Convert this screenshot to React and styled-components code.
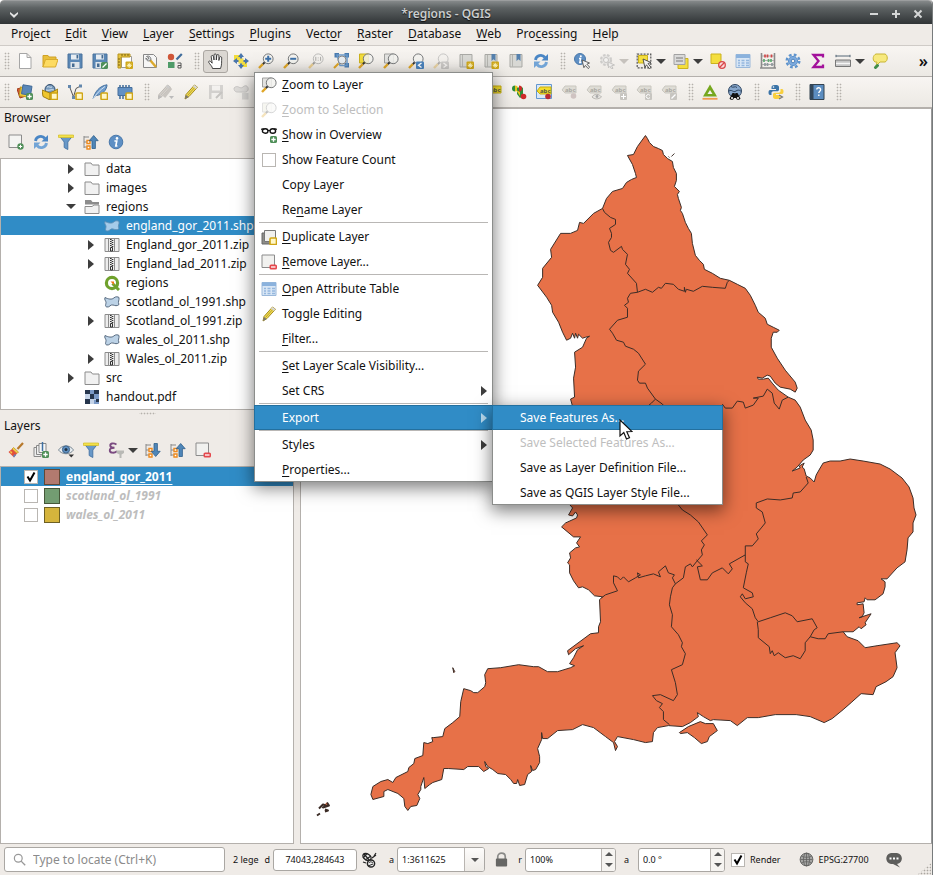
import React from 'react';
import styled, { createGlobalStyle, css } from 'styled-components';

const GlobalStyle = createGlobalStyle`
  *, *::before, *::after { box-sizing: border-box; }
  html, body, #root { margin: 0; height: 100%; }
  body { background: #fff; overflow: hidden; }
  button, input, select { font: inherit; color: inherit; }
`;

const blue = '#308cc6';
const panel = '#efebe7';
const line = '#b4b0ac';

/* ---------- icon artwork, on a 16 x 16 grid ---------- */

const Lens = ({ back, sign, mark }) => (
  <>
    {back}
    <circle cx="10.2" cy="5.8" r="4.9" fill="#f2f2ee" fillOpacity=".85" stroke="#77797a" />
    <path d="M6.6 9.4 4.8 11.2" stroke="#333" strokeWidth="2" />
    <path d="M4.8 11.2 1 15" stroke="#e0a728" strokeWidth="2.4" />
    {sign}
    {mark}
  </>
);
const YellowBadge = () => (
  <rect x="9" y="9" width="6.5" height="6.5" rx="1" fill="#fff7c8" stroke="#cfa515" strokeWidth="1.6" />
);
const StarBadge = () => (
  <>
    <rect x="8.5" y="8.5" width="7.5" height="7.5" rx="1" fill="#d0a81a" />
    <path d="M12.2 9.8v5M9.8 12.3h5M10.6 10.7l3.3 3.3M13.9 10.7l-3.3 3.3" stroke="#fff6c0" />
  </>
);
const GreenBadge = () => (
  <g transform="translate(9 9)">
    <rect width="7" height="7" rx="1.6" fill="#4f8f58" />
    <path d="M3.5 1.3v4.4M1.3 3.5h4.4" stroke="#fff" strokeWidth="1.3" />
  </g>
);
const RedBadge = () => (
  <>
    <rect x="8.5" y="10.5" width="7.5" height="5" rx="1.6" fill="#e5484d" />
    <path d="M10 13h4.5" stroke="#fff" strokeWidth="1.3" />
  </>
);
const Disk = () => (
  <>
    <path d="M1 1h14v14H1z" fill="#5a87b5" stroke="#4a739c" />
    <path d="M4 1.5h8v5H4z" fill="#e8edf2" />
    <path d="M3.5 9h9v6h-9z" fill="#dfe5ea" />
    <path d="M9.5 2h1.8v3.4H9.5zM5 10.5h2.5V14H5z" fill="#456b91" />
  </>
);
const Tag = ({ yellow }) => (
  <>
    <path d="M1 6 4 2h11v7H4z" fill={yellow ? '#f4dd2a' : '#dedcd5'} stroke={yellow ? '#c9ae10' : '#c9c7c0'} />
    <text x="4" y="8" fontFamily="Noto Sans, sans-serif" fontSize="6" fontWeight="700" fill={yellow ? '#554' : '#aaa8a2'}>abc</text>
  </>
);
const Pencil = ({ grey }) => (
  <>
    <path d="M2 15l1-4.5L11.5 1 14.5 3.2 6 12.5z" fill={grey ? '#d5d1cc' : '#f1dc52'} stroke={grey ? '#bdb9b4' : '#a48b22'} />
    <path d="M10 2.8l2.8 2.2 1.7-1.8L11.5 1z" fill={grey ? '#ccc' : '#d9d9d9'} />
    <path d="M2 15l1-4 2.6 2z" fill={grey ? '#bbb' : '#777'} />
    <path d="M4.5 11.5l7-7.8" stroke={grey ? '#c2beb9' : '#b9a12d'} />
  </>
);
const Refresh = () => (
  <>
    <path d="M2.5 7C3 2.5 9 .8 12 4.5" fill="none" stroke="#4a86c5" strokeWidth="2.8" />
    <path d="M15 1v6.5H8.5z" fill="#4a86c5" />
    <path d="M13.5 9C13 13.5 7 15.2 4 11.5" fill="none" stroke="#72a4d6" strokeWidth="2.8" />
    <path d="M1 15V8.5h6.5z" fill="#72a4d6" />
  </>
);
const Funnel = () => (
  <>
    <path d="M1 1.5h14L9.8 8v7.5l-3.6-2V8z" fill="#6898c8" stroke="#4a78a8" />
    <path d="M.5 1h15v2.5H.5z" fill="#f3e14c" stroke="#d4bd25" strokeWidth=".7" />
  </>
);
const Info = () => (
  <>
    <circle cx="8" cy="8" r="6.8" fill="#5e8fc4" stroke="#4a78aa" />
    <circle cx="9" cy="4.4" r="1.3" fill="#fff" />
    <path d="M6.4 7h2.4l-1 5h1.6" fill="none" stroke="#fff" strokeWidth="1.6" />
  </>
);
const TreeArrow = ({ down }) => (
  <>
    <path d="M1 2v12M1 3h5M1 8h4M1 13h4" stroke="#888" fill="none" />
    <path d="M4 6.5h3v3H4zM4 12h3v3H4z" fill="#fff" stroke="#ef8a1d" strokeWidth="1.4" />
    <path
      d={down ? 'M9 1.5h3.4v7.8h2.8L10.7 14.5 6.2 9.3h2.8z' : 'M9 14.5h3.4V6.7h2.8L10.7 1.5 6.2 6.7H9z'}
      fill="#4f86b8" stroke="#2f5f8c" strokeWidth=".8"
    />
  </>
);
const Notebook = ({ blueMark }) => (
  <>
    <path d="M2 1.5h12V14H2z" fill="#d8d8d4" stroke="#a9a9a5" />
    <path d="M4.5 2v12" stroke="#b5b5b0" />
    {blueMark && <path d="M8.500 1h4v7l-2-1.800-2 1.800z" fill="#5580ad" />}
  </>
);
const Table = () => (
  <>
    <path d="M1 1.5h14v13H1z" fill="#d8e6f5" stroke="#9ab8da" />
    <path d="M1 1.5h14V5H1z" fill="#8bb2dd" />
    <path d="M3 7.5h2M6.5 7.5h3M11 7.5h3M3 10h2M6.5 10h3M11 10h3M3 12.5h2M6.5 12.5h3M11 12.5h3" stroke="#94b7de" strokeWidth="1.3" />
  </>
);
const Blob = ({ light }) => (
  <path
    d="M1 3.5C4 5 8 6 10 3.800 12 2.200 14 2.800 15 3.500c.5 3-1.500 4 0 7-2 2-4 1-6 .500-3-.8-3 2.500-6 2-2.500-.5-1-2.500-1-4.500S0 6 1 3.500z"
    fill={light ? '#a5cbe9' : '#bcd2e6'} stroke={light ? '#5f8fb5' : '#4a5e74'} strokeWidth=".9"
  />
);
const Folder = () => <path d="M1 2h6l1.5 2H15v10.5H1z" fill="#f1f1f1" stroke="#8c8c8c" />;
const Gear = () => (
  <>
    <circle cx="8" cy="8" r="6.300" fill="none" stroke="#5f94cd" strokeWidth="2.400" strokeDasharray="2.700 2.250" />
    <circle cx="8" cy="8" r="4.600" fill="#7caade" stroke="#5f94cd" />
    <circle cx="8" cy="8" r="1.800" fill="#f5f2ee" stroke="#5284ba" />
  </>
);
const Globe = ({ fill, stroke }) => (
  <>
    <circle cx="8" cy="8" r="6.8" fill={fill} stroke={stroke} />
    <path d="M1.5 8h13M8 1v14M2.500 4.500c3 1.500 8 1.500 11 0M2.500 11.500c3-1.500 8-1.500 11 0" fill="none" stroke={stroke} strokeWidth=".8" />
    <ellipse cx="8" cy="8" rx="3.3" ry="6.8" fill="none" stroke={stroke} strokeWidth=".8" />
  </>
);

const icons = {
  page: <path d="M2.5.5h7.5l4 4v11H2.5zM10 .5v4h4" fill="#fff" stroke="#a6a6a6" />,
  open: (
    <>
      <path d="M1 2.5h5l1 1.5h7v3H4l-3 7z" fill="#e9bf3a" stroke="#cfa126" />
      <path d="M3.5 6.5H16l-2.5 7.5H1z" fill="#fddb62" stroke="#d8ab2c" />
    </>
  ),
  save: <Disk />,
  saveAs: <><Disk /><rect x="9" y="9" width="7" height="7" rx="1.5" fill="#4f8f58" /><path d="M10.5 14.5l4-4" stroke="#fff" strokeWidth="1.3" /></>,
  layout: (
    <>
      <path d="M4.5 3.5h10v11h-10z" fill="#fff" stroke="#9b9b9b" />
      <path d="M1 1h12v3H4v11H1z" fill="#e7c440" stroke="#b8951e" />
      <path d="M5 1v2M8 1v2M11 1v2M1 6h2M1 9h2M1 12h2" stroke="#7b6210" />
      <StarBadge />
    </>
  ),
  layoutManager: (
    <>
      <path d="M1.5 1.500h10l3 3v10h-13z" fill="#f6f6f6" stroke="#888" />
      <path d="M8 7l6 7" stroke="#dba92c" strokeWidth="2.4" />
      <path d="M4.500 3.500C7 2 9.500 4.500 8.800 7 6.500 9 4 7.500 3.800 5l2 1.500L7 5z" fill="#d9dde0" stroke="#666" strokeWidth=".8" />
    </>
  ),
  styleManager: (
    <>
      <circle cx="4" cy="4" r="3.2" fill="#cf5638" />
      <path d="M14.8 1 9.5 6.5" stroke="#3f6c9b" strokeWidth="2.2" />
      <path d="M1 9h6.5v6H1z" fill="#4f9b68" />
      <path d="M10.5 10h3.5v5h-3v-2.500h3" fill="none" stroke="#555" />
    </>
  ),
  hand: (
    <path d="M4.500 15.500c0-2-3-4.500-3.800-6.200C.2 8 2 7.500 3 9l1.200 1.200-1-6.500c0-1.600 2-1.700 2.300 0L6 7V2c0-1.500 2.200-1.500 2.300 0v5l.5-4.500c.2-1.500 2.200-1.200 2.100.2V7.500l.8-3.200c.5-1.300 2.200-.8 2 .6-.2 3.800.3 7-1.200 10.600z" fill="#fff" stroke="#333" strokeWidth=".9" />
  ),
  panSelection: (
    <>
      <path d="M1 2h7v7H1zM8 7h6v7H8z" fill="#f2dc3a" />
      <path d="M8 0l3 4H5zM8 16l3-4H5zM0 8l4-3v6zM16 8l-4-3v6z" fill="#4a76ad" />
      <path d="M8 3v10M3 8h10" stroke="#4a76ad" strokeWidth="2.200" />
      <path d="M5.500 5.500h5v5h-5z" fill="#f4e04a" />
    </>
  ),
  zoomIn: <Lens sign={<path d="M7.2 5.8h6M10.2 2.8v6" stroke="#3d70a8" strokeWidth="2" />} />,
  zoomOut: <Lens sign={<path d="M7.2 5.8h6" stroke="#3d70a8" strokeWidth="2" />} />,
  zoomNative: (
    <g opacity=".45">
      <Lens sign={<path d="M7.800 3.800v4M12.600 3.800v4M10.200 4.500v.8M10.200 6.800v.8" stroke="#555" />} />
    </g>
  ),
  zoomFull: (
    <>
      <path d="M1.5 0h4.5v4.5H1.5zM11.5 0H16v4.500h-4.500zM11.500 10H16v4.500h-4.500z" fill="#4a7cb0" />
      <path d="M4 2h10v10.5H7z" fill="none" stroke="#6c9aca" strokeWidth="1.5" />
      <circle cx="9" cy="7" r="4" fill="#e5ecf3" fillOpacity=".8" stroke="#888" />
      <path d="M5.5 10.5 1 15" stroke="#e0a728" strokeWidth="2.2" />
    </>
  ),
  zoomSelected: <Lens back={<path d="M1.5 1h9v9h-9z" fill="#f2dc3a" stroke="#cbb21d" />} />,
  zoomLayer: <Lens back={<path d="M1.5 1h9v9h-9z" fill="#e2e2e0" stroke="#a0a09e" />} />,
  zoomLayerOff: <g opacity=".3"><Lens back={<path d="M1.5 1h9v9h-9z" fill="#e2e2d0" stroke="#a0a09e" />} /></g>,
  zoomLast: <Lens mark={<><rect x="8" y="8.5" width="8" height="7.5" rx="1" fill="#4a83bd" /><path d="M13.500 10l-3 2.200 3 2.300" fill="none" stroke="#fff" strokeWidth="1.400" /></>} />,
  zoomNext: <g opacity=".35"><Lens mark={<><rect x="8" y="8.5" width="8" height="7.5" rx="1" fill="#888" /><path d="M10.500 10l3 2.200-3 2.300" fill="none" stroke="#fff" strokeWidth="1.400" /></>} /></g>,
  newMap: <><Notebook /><StarBadge /></>,
  newBookmark: <><Notebook blueMark /><StarBadge /></>,
  bookmarks: <Notebook blueMark />,
  refresh: <Refresh />,
  identify: (
    <>
      <circle cx="6" cy="6" r="5.5" fill="#5e8fc4" stroke="#4a78aa" />
      <path d="M5 5.500h1.600l-.8 4h1.500" fill="none" stroke="#fff" strokeWidth="1.400" />
      <circle cx="6.8" cy="3.3" r="1" fill="#fff" />
      <path d="M8 7l7.500 3-2.600 1.200 2.800 3-1.500 1.400-2.800-3.200-1.500 2.300z" fill="#f2f2f2" stroke="#555" strokeWidth=".9" />
    </>
  ),
  action: (
    <g opacity=".5">
      <circle cx="7" cy="7" r="5" fill="#ddd" stroke="#aaa" strokeWidth="2.2" strokeDasharray="2.5 1.5" />
      <circle cx="7" cy="7" r="2.5" fill="#f5f5f5" stroke="#999" />
      <path d="M9 9l6.500 3-3 .8 1.500 2.500-1.500.5-1.500-2.500-1.500 1.500z" fill="#eee" stroke="#999" />
    </g>
  ),
  select: (
    <>
      <path d="M1.200 1.200h13.600v13.600H1.200z" fill="none" stroke="#555" strokeWidth="1.200" strokeDasharray="2 1.200" />
      <path d="M2.500 2.500h9v7.500h-9z" fill="#f4de3e" stroke="#cbb21d" />
      <path d="M7 6l8 3.500-3 1 3 3.800-1.600 1.400-2.900-3.900-1.600 2.700z" fill="#f2f2f2" stroke="#444" strokeWidth=".9" />
    </>
  ),
  selectValue: (
    <>
      <path d="M5 5.500h10v10H5z" fill="#f4de3e" stroke="#cbb21d" />
      <path d="M1 1.500h11v10H1z" fill="#dadada" stroke="#a2a2a2" />
      <path d="M3 5h7M3 8h7" stroke="#999" strokeWidth="1.500" />
    </>
  ),
  deselect: (
    <>
      <path d="M1 1h10v9.500H1z" fill="#f4de3e" stroke="#cbb21d" />
      <circle cx="12" cy="12" r="3.300" fill="#fbdada" stroke="#d8484a" strokeWidth="1.300" />
      <path d="M9.800 14.200l4.400-4.400" stroke="#d8484a" strokeWidth="1.300" />
    </>
  ),
  table: <Table />,
  abacus: (
    <>
      <path d="M1.5 0v15.500M14.500 0v15.500M0 15h16" stroke="#8b8b8b" strokeWidth="1.6" />
      <path d="M2 3h12M2 7.500h12M2 11.500h12" stroke="#aaa" />
      <path d="M5 1.500v3M7.500 1.500v3M11.500 1.500v3" stroke="#d14747" strokeWidth="1.700" />
      <path d="M4 6v3M8.500 6v3M11 6v3" stroke="#5faa72" strokeWidth="1.700" />
      <path d="M5 10v3M7.500 10v3M12 10v3" stroke="#8f989e" strokeWidth="1.700" />
    </>
  ),
  gear: <Gear />,
  sigma: <path d="M13 4.500V2H3.500L8.500 8l-5 6H13v-2.500" fill="none" stroke="#a3129b" strokeWidth="2.300" />,
  measure: (
    <>
      <path d="M1 3h14M1 1.800v2.400M15 1.800v2.400" stroke="#567" />
      <path d="M.5 7h15v6.500H.5z" fill="#c5c5c5" stroke="#777" />
      <path d="M1 10.500h14" stroke="#f6f6f6" strokeWidth="1.500" />
    </>
  ),
  bubble: (
    <>
      <path d="M4 1h9c3 1 3 7 0 8H8l-4 4 1-4H3C0 7 1 2 4 1z" fill="#f7e97e" stroke="#c8b534" />
      <path d="M3.500 14.500l2-2" stroke="#3f8d4a" strokeWidth="3" strokeLinecap="round" />
    </>
  ),
  dataSource: (
    <>
      <path d="M0 5l7-2 2 9-6 2z" fill="#d15a35" stroke="#a33f20" />
      <path d="M3 3.500h8v9H3z" fill="#efc93b" stroke="#bd991d" transform="rotate(8 7 7)" />
      <path d="M6 .8l9 1.500-1.500 9-9-1.500z" fill="#5a87b8" stroke="#426b97" />
      <GreenBadge />
    </>
  ),
  geopackage: (
    <>
      <circle cx="8" cy="5.500" r="5" fill="#7598bb" stroke="#334e6c" />
      <path d="M5 3c2-1 3 1 5 0M4 6c3 1 5-1 8 0" stroke="#dce8f4" fill="none" />
      <path d="M0 6l8 3 8-4-1 7-7 4-7-3.500z" fill="#efc62d" stroke="#9f7c12" />
      <path d="M8 9v7" stroke="#9f7c12" />
      <YellowBadge />
    </>
  ),
  newShape: (
    <>
      <path d="M2.500 2.500 6.500 13 9 4.500 13.500 2" fill="none" stroke="#555" />
      <path d="M1 1h3v3H1zM12 .5h3v3h-3zM5 12h3v3H5z" fill="#6387ad" />
      <YellowBadge />
    </>
  ),
  feather: <><path d="M1 15C3 8 7 2 15 .8 15 6 10 11 4.500 11.500" fill="#6f9ccc" stroke="#46719e" /><path d="M1 15C4 10 8 6 13 2.500" stroke="#d8e6f3" fill="none" /><YellowBadge /></>,
  chip: <><path d="M3 1v14M6 1v14M9 1v14M12 1v14" stroke="#47719e" strokeWidth="1.6" /><path d="M1 3.500h14v8H1z" fill="#6291c4" stroke="#466f9c" /><YellowBadge /></>,
  edits: <g><g transform="translate(-2 0)"><Pencil grey /></g><path d="M6 13 13 4" stroke="#c9c5c0" strokeWidth="3" /><path d="M11 12h5l-2.500 3z" fill="#bbb" /></g>,
  pencil: <Pencil />,
  saveOff: <g opacity=".35"><path d="M1 1h14v14H1z" fill="#999" /><path d="M4 1.500h8v5H4zM3.500 9h9v6h-9z" fill="#f3f3f3" /><path d="M8 14l6-6" stroke="#777" strokeWidth="2" /></g>,
  shapeOff: <g opacity=".4"><path d="M1 4c4-4 6 2 9-1s6 0 5 3-4 2-7 2-7 1-7-4z" fill="#bbb" stroke="#888" /><rect x="9" y="9" width="6.500" height="6.500" fill="#aaa" /></g>,
  tagYellow: <Tag yellow />,
  diagram: (
    <>
      <path d="M4 1.500a3 3 0 1 0 0 6z" fill="#2f8f3a" />
      <path d="M4 1.500a3 3 0 0 1 0 6z" fill="#e8c51f" />
      <path d="M6 4l4-1.500 2 1.500v8l-3 2-3-4z" fill="#2f8f3a" />
      <path d="M8 1.500a3 3 0 1 1 0 6z" fill="#cf2a2a" />
      <path d="M5 6l4 2v4z" fill="#e8c51f" />
      <circle cx="12.500" cy="12.500" r="2.800" fill="#cf2a2a" />
    </>
  ),
  tagPinned: (
    <>
      <path d="M.5.5h15v14H.5z" fill="#dbe8f6" stroke="#6397d1" />
      <g transform="translate(0 1)"><Tag yellow /></g>
      <circle cx="12" cy="12.500" r="2.800" fill="#b92a33" />
    </>
  ),
  tagPin: <><Tag /><circle cx="12.5" cy="12" r="2.8" fill="#cfc3c1" /></>,
  tagEye: <><Tag /><path d="M6 13c2-3.500 7-3.500 9.500 0-3 2.500-7 2.500-9.500 0z" fill="#e8e6e2" stroke="#b9b7b2" /><circle cx="11" cy="12.500" r="1.400" fill="#aaa" /></>,
  tagMove: <><Tag /><rect x="9" y="9" width="7" height="7" rx="1" fill="#c7c5c0" /><path d="M12.5 10v5M10 12.500h5" stroke="#fff" /></>,
  tagRotate: <><Tag /><rect x="9" y="9" width="7" height="7" rx="1" fill="#c7c5c0" /><path d="M14 11.500a2 2 0 1 0 0 2" stroke="#fff" fill="none" /></>,
  tagEdit: <><Tag /><rect x="9" y="9" width="7" height="7" rx="1" fill="#c7c5c0" /><path d="M10.500 14.500l4-4" stroke="#fff" strokeWidth="1.300" /></>,
  triangle: <><path d="M8 .5 15 12.500H1z" fill="#76a71e" /><path d="M8 6 10.500 10H5.500z" fill="#f5f2ee" /><path d="M.5 14.800h15" stroke="#f09a4e" strokeWidth="1.800" /></>,
  metaSearch: (
    <>
      <circle cx="8" cy="7" r="6.500" fill="#87a7cc" stroke="#2e4560" />
      <path d="M4 2.500c2 2 4-1 6 1M2 7c3-2 4 2 7 0s4 0 5 0" stroke="#2e4560" fill="none" />
      <path d="M5.500 9h2l.5 1.500L8.500 9h2l3 5.500c-1 2-4 1.800-4.500-.5H7c-.5 2.300-3.500 2.500-4.500.5z" fill="#111" />
      <path d="M4 14h2M10 14h2" stroke="#fff" strokeWidth="1.400" />
    </>
  ),
  python: (
    <>
      <path d="M7 1c-3 0-3.500 1-3.500 2.500V5H8v1H2C0 6 0 11 2 11h1.500V9c0-1 .8-1.700 2-1.700h3.800c1 0 1.700-.8 1.700-1.800v-2C11 1.500 10 1 7 1z" fill="#3b74a8" />
      <path d="M9 15c3 0 3.500-1 3.500-2.500V11H8v-1h6c2 0 2-5 0-5h-1.500v2c0 1-.8 1.700-2 1.700H6.700c-1 0-1.700.8-1.700 1.800v2C5 14.500 6 15 9 15z" fill="#f8cf3e" />
      <circle cx="5.500" cy="3" r=".8" fill="#fff" />
      <path d="M11 11l3.500 2-3.500 2" fill="none" stroke="#777" strokeWidth="1.200" />
    </>
  ),
  help: (
    <>
      <path d="M1 .5h14v15H1z" fill="#5c8dc0" stroke="#33424f" />
      <path d="M1 .5h3.500v15H1z" fill="#33475a" />
      <path d="M7.800 5.500c0-2.600 4-2.300 3.800.2 0 1.500-1.800 1.500-1.800 3.300M9.800 10.500V12" fill="none" stroke="#fff" strokeWidth="1.400" />
    </>
  ),
  addLayer: <><path d="M1 1h12.5v12.5H1z" fill="#f4f4f2" stroke="#8b8b8b" /><circle cx="12.5" cy="12.5" r="3.2" fill="#4f8f58" /><path d="M12.5 10.800v3.400M10.800 12.500h3.400" stroke="#fff" /></>,
  funnel: <Funnel />,
  collapse: <TreeArrow />,
  expand: <TreeArrow down />,
  info: <Info />,
  brush: (
    <>
      <path d="M9.500 7 15 1" stroke="#b7792c" strokeWidth="2.200" />
      <path d="M5.500 5.500l5 4.500-1.500 1.500-5-4.500z" fill="#f2d34b" stroke="#b98d1e" strokeWidth=".7" />
      <path d="M4 7l5 4.500-3 4L.5 10z" fill="#e2503c" />
      <path d="M2 9l2.500 1L3 12z" fill="#f5d643" /><path d="M5 14l2-2 1 1-2 2.500z" fill="#5a87c5" />
    </>
  ),
  addGroup: <><path d="M1 5.500h7v9H1z" fill="#eee" stroke="#888" /><path d="M3.500 3.500h7v9h-7z" fill="#eee" stroke="#888" /><path d="M6 1.500h7v9H6z" fill="#f6f6f6" stroke="#888" /><path d="M9.500 0v9" stroke="#3f70a3" strokeWidth="1.500" /><GreenBadge /></>,
  eye: <><path d="M.5 8C4 2.500 12 2.500 15.500 8 12 13 4 13 .5 8z" fill="#e9eef2" stroke="#7d8a94" /><circle cx="8" cy="7.500" r="3.600" fill="#5f8fc0" stroke="#3d648c" /><circle cx="8" cy="7.500" r="1.500" fill="#234" /><path d="M10.500 12.500H16l-2.700 3z" fill="#333" /></>,
  expression: <><path d="M8.500 2.500C5 .5 2 1.500 2.300 3.800 2.500 5.500 4 5.700 6.500 5.700 3 5.700 1.500 7 1.800 8.600 2 11 6 11.500 9 9.300" fill="none" stroke="#7a4a80" strokeWidth="1.900" /><path d="M8.500 8.500H16v2.500l-2.500 1.500V16h-2v-3.500L8.500 11z" fill="#b9b9b5" /></>,
  removeLayer: <><path d="M1 1h12.5v12.5H1z" fill="#f1f1ef" stroke="#8b8b8b" /><RedBadge /></>,
  glasses: <><path d="M0 2.500c1.500-1 2.500-1 3 0M16 2.500c-1.500-1-2.500-1-3 0M7 3.500h2" stroke="#111" strokeWidth="1.200" fill="none" /><ellipse cx="4.200" cy="4" rx="2.800" ry="2.200" fill="none" stroke="#111" strokeWidth="1.400" /><ellipse cx="11.800" cy="4" rx="2.800" ry="2.200" fill="none" stroke="#111" strokeWidth="1.400" /><GreenBadge /></>,
  duplicate: <><path d="M1 4h10v11H1z" fill="#8d8d89" stroke="#666" /><path d="M3.500 1.500h11v11h-11z" fill="#f0f0ee" stroke="#777" /><YellowBadge /></>,
  folder: <Folder />,
  folderOpen: <><path d="M1 1h6l1.5 2H15v2.5H1z" fill="#8c8c8c" /><path d="M1 7.500h7l2-1.500h5v8.500H1z" fill="#f1f1f1" stroke="#8c8c8c" /></>,
  shape: <Blob />,
  shapeSelected: <Blob light />,
  zip: <><path d="M1 1.500h14v13H1z" fill="#ededed" stroke="#8c8c8c" /><path d="M4.500 1v14M10.500 1v14" stroke="#8c8c8c" /><path d="M6.800 2v8M8.500 3v8" stroke="#333" strokeWidth="1.600" strokeDasharray="1 1" /><path d="M6.500 10.500h2v3.500h-2z" fill="none" stroke="#333" /></>,
  qgis: <><circle cx="8" cy="8" r="5.6" fill="#fff" stroke="#6fa12c" strokeWidth="3.2" /><path d="M8.500 8.500 15 15" stroke="#6fa12c" strokeWidth="3" /><path d="M6.500 6.500h3.500v3.500z" fill="#ee7913" /></>,
  pdf: (
    <>
      <path d="M1 1h14v14H1z" fill="#c4d3e8" />
      <path d="M1 1h5v4H1zM10 1h5v4h-5zM6 5h4v5H6zM1 10h5v5H1z" fill="#26364d" />
      <path d="M6 1h4v4H6zM10 5h5v5h-5zM10 11h5v4h-5z" fill="#7c9bc8" />
      <path d="M12 10h3v3h-3z" fill="#26364d" />
    </>
  ),
  search: <><circle cx="6.5" cy="6.5" r="4.8" fill="none" stroke="#999" strokeWidth="1.5" /><path d="M10 10l5 5" stroke="#999" strokeWidth="1.7" /></>,
  extents: (
    <>
      <ellipse cx="6" cy="5" rx="4.500" ry="3" transform="rotate(35 6 5)" fill="#eee" stroke="#222" strokeWidth="1.400" />
      <path d="M3 2l6 7M6 1.500 2 6M10 4 4 8M13 4l2-3M11 6l4-3M2 10l3 1" stroke="#222" strokeWidth="1.200" />
      <circle cx="10" cy="11.500" r="3.600" fill="#eee" stroke="#222" strokeWidth="1.500" />
      <path d="M8 11c1-2 3-1 4 0M7 14l5-2" stroke="#222" fill="none" />
    </>
  ),
  lock: <><path d="M4 8V5c0-5 8-5 8 0v3" fill="none" stroke="#8a8a88" strokeWidth="1.8" /><rect x="2" y="7" width="12" height="8.5" rx="1" fill="#666664" /></>,
  globe: <Globe fill="#a5a5a3" stroke="#5f5f5d" />,
  messages: <><path d="M5 1h6c6.500 1 6.500 10 0 11l3 3.500-7-3.500H5C-1.300 11-1.300 2 5 1z" fill="#5d5d5b" /><path d="M3.500 6.500h2M7 6.500h2M10.500 6.500h2" stroke="#fff" strokeWidth="2" /></>,
};

const Svg = styled.svg`
  display: block;
  flex: none;
  width: ${p => p.$size || 16}px;
  height: ${p => p.$size || 16}px;
`;
const Icon = ({ name, size }) => (
  <Svg viewBox="0 0 16 16" $size={size} fill="none" aria-hidden="true">{icons[name]}</Svg>
);

/* ---------- window chrome ---------- */

const Window = styled.div`
  position: relative;
  display: flex;
  flex-direction: column;
  height: 100vh;
  min-height: 600px;
  overflow: hidden;
  border-right: 1px solid #777b7c;
  border-radius: 4px 4px 0 0;
  background: ${panel};
  color: #111;
  font: 12px/19px "Noto Sans", sans-serif;
`;
const TitleBar = styled.header`
  display: grid;
  grid-template-columns: 40px 1fr 80px;
  align-items: center;
  flex: none;
  height: 24px;
  padding: 2px 6px 0;
  border-top: 1px solid #9b9d9e;
  border-radius: 4px 4px 0 0;
  background: linear-gradient(#85898a, #5d6263 30%, #303436);
  color: #c9cccd;
`;
const Title = styled.h1`
  margin: 0;
  text-align: center;
  font-size: 12px;
  font-weight: 600;
  line-height: 20px;
  text-shadow: 0 1px 1px #111;
`;
const WindowButtons = styled.div`
  display: flex;
  gap: 6px;
  justify-content: ${p => (p.$end ? 'flex-end' : 'flex-start')};
`;
const WindowButton = styled.button`
  width: 16px;
  height: 16px;
  padding: 0;
  border: 0;
  background: none;
`;
const MenuBar = styled.nav`
  display: flex;
  gap: 1px;
  flex: none;
  height: 22px;
  padding-left: 4px;
  border-bottom: 1px solid #cfcbc7;
`;
const MenuBarItem = styled.button`
  padding: 0 7px 2px;
  border: 0;
  background: none;
  line-height: 18px;
`;
const Mnemonic = styled.span`
  text-decoration: underline;
  text-underline-offset: 2px;
  text-decoration-thickness: 1px;
  text-decoration-skip-ink: none;
`;
const Label = ({ text }) => {
  const at = text.indexOf('&');
  if (at < 0) return text;
  return <>{text.slice(0, at)}<Mnemonic>{text[at + 1]}</Mnemonic>{text.slice(at + 2)}</>;
};

const Toolbar = styled.div`
  display: flex;
  align-items: center;
  flex: none;
  height: 31px;
  border-bottom: 1px solid ${line};
  background: linear-gradient(#f8f5f2, #ece9e4);
`;
const Grip = styled.span`
  flex: none;
  width: ${p => (p.$first ? 12 : 16)}px;
  height: 18px;
  background: radial-gradient(circle, #b5b1ac 40%, transparent 50%) ${p => (p.$first ? 4 : 7)}px 0 / 3px 3px repeat-y,
    radial-gradient(circle, #b5b1ac 40%, transparent 50%) ${p => (p.$first ? 7 : 10)}px 0 / 3px 3px repeat-y;
`;
const ToolButton = styled.button`
  display: flex;
  align-items: center;
  justify-content: center;
  flex: none;
  width: 25px;
  height: 23px;
  padding: 0;
  border: 1px solid transparent;
  border-radius: 3px;
  background: none;
  ${p => p.$pressed && css`
    border-color: #aaa6a1;
    background: #dbd7d2;
  `}
`;
const DropButton = styled.button`
  flex: none;
  width: 12px;
  height: 23px;
  padding: 0;
  border: 0;
  background: none;
`;
const Overflow = styled.button`
  margin-left: auto;
  padding: 0 4px;
  border: 0;
  background: none;
  font-size: 16px;
  font-weight: 600;
`;
const Triangle = styled.span`
  display: block;
  width: 0;
  height: 0;
  ${p => p.$dir === 'right' && css`
    border: solid transparent;
    border-width: 5px 0 5px 6px;
    border-left-color: ${p.$color || '#3d3d3d'};
  `}
  ${p => p.$dir === 'down' && css`
    border: solid transparent;
    border-width: ${p.$small ? '4px 4px 0' : '5px 5px 0'};
    border-top-color: ${p.$color || '#3d3d3d'};
  `}
  ${p => p.$dir === 'up' && css`
    border: solid transparent;
    border-width: 0 4px 4px;
    border-bottom-color: ${p.$color || '#3d3d3d'};
  `}
`;

const mainTools = ['|', 'page', 'open', 'save', 'saveAs', 'layout', 'layoutManager', 'styleManager', '|',
  'hand!', 'panSelection', 'zoomIn', 'zoomOut', 'zoomNative', 'zoomFull', 'zoomSelected', 'zoomLayer',
  'zoomLast', 'zoomNext', 'newMap', 'newBookmark', 'bookmarks', 'refresh', '|',
  'identify', 'action~', 'select>', 'selectValue>', 'deselect', 'table', 'abacus', 'gear', 'sigma', 'measure>', 'bubble'];
const layerTools = ['|', 'dataSource', 'geopackage', 'newShape', 'feather', 'chip', '|',
  'edits', 'pencil', 'saveOff', 'shapeOff', 'shapeOff', 'shapeOff>', 'saveOff', 'saveOff', 'saveOff', 'saveOff', '|',
  'saveOff', 'saveOff', 'tagYellow', 'diagram', 'tagPinned', 'tagPin', 'tagEye', 'tagMove', 'tagRotate', 'tagEdit', '|',
  'triangle', 'metaSearch', '|', 'python', '|', 'help', '|'];

const Tools = ({ items }) => items.map((item, i) => {
  if (item === '|') return <Grip key={i} $first={i === 0} />;
  const name = item.replace(/[!>~]/, '');
  return (
    <React.Fragment key={i}>
      <ToolButton $pressed={item.endsWith('!')} aria-label={name}><Icon name={name} /></ToolButton>
      {/[>~]$/.test(item) && (
        <DropButton aria-label={`${name} options`}>
          <Triangle $dir="down" $color={item.endsWith('~') ? '#c6c2bd' : undefined} />
        </DropButton>
      )}
    </React.Fragment>
  );
});

/* ---------- docks ---------- */

const Main = styled.main`
  display: grid;
  grid-template-columns: 294px 1fr;
  column-gap: 6px;
  flex: 1;
  min-height: 0;
`;
const Docks = styled.div`
  display: flex;
  flex-direction: column;
  min-height: 0;
`;
const DockTitle = styled.h2`
  margin: 0;
  padding-left: 4px;
  font-size: 12px;
  font-weight: 400;
  line-height: 20px;
`;
const DockTools = styled.div`
  display: flex;
  align-items: center;
  height: 30px;
  padding: 0 0 2px 3px;
`;
const TreeBox = styled.ul`
  margin: 0;
  padding: 0;
  overflow: hidden;
  list-style: none;
  border: 1px solid ${line};
  background: #fff;
  ${p => (p.$fill ? 'flex: 1;' : 'flex: none; height: 252px;')}
`;
const TreeRow = styled.li`
  display: flex;
  align-items: center;
  gap: 6px;
  height: 19px;
  padding-left: ${p => 64 + p.$level * 20}px;
  white-space: nowrap;
  ${p => p.$selected && css`
    background: ${blue};
    color: #fff;
  `}
`;
const Twist = styled.span`
  display: flex;
  justify-content: center;
  width: 11px;
  margin-right: 2px;
`;
const Splitter = styled.div`
  align-self: center;
  width: 17px;
  height: 6px;
  background: radial-gradient(circle, #b5b1ac 40%, transparent 50%) center / 3px 3px repeat-x;
`;

const files = [
  ['data', 'folder', 0, 'right'],
  ['images', 'folder', 0, 'right'],
  ['regions', 'folderOpen', 0, 'down'],
  ['england_gor_2011.shp', 'shapeSelected', 1, null, true],
  ['England_gor_2011.zip', 'zip', 1, 'right'],
  ['England_lad_2011.zip', 'zip', 1, 'right'],
  ['regions', 'qgis', 1],
  ['scotland_ol_1991.shp', 'shape', 1],
  ['Scotland_ol_1991.zip', 'zip', 1, 'right'],
  ['wales_ol_2011.shp', 'shape', 1],
  ['Wales_ol_2011.zip', 'zip', 1, 'right'],
  ['src', 'folder', 0, 'right'],
  ['handout.pdf', 'pdf', 0],
];

const LayerRow = styled.li`
  height: 19px;
  padding-left: 23px;
  ${p => p.$active && css`background: ${blue};`}
`;
const LayerLabel = styled.label`
  display: flex;
  align-items: center;
  gap: 6px;
  height: 19px;
  font-weight: 700;
  color: ${p => (p.$active ? '#fff' : '#bdbdbd')};
  font-style: ${p => (p.$active ? 'normal' : 'italic')};
  text-decoration: ${p => (p.$active ? 'underline' : 'none')};
  text-underline-offset: 3px;
  text-decoration-skip-ink: none;
`;
const Check = styled.input.attrs({ type: 'checkbox' })`
  appearance: none;
  flex: none;
  width: 14px;
  height: 14px;
  margin: 0;
  border: 1px solid #b9b6b2;
  background: #fff;
  &:checked {
    background: #fff url("data:image/svg+xml,%3Csvg xmlns='http://www.w3.org/2000/svg' viewBox='0 0 12 12'%3E%3Cpath d='M2.5 5.5 5 9.5 9.5 1.5' fill='none' stroke='%23000' stroke-width='2'/%3E%3C/svg%3E") center / 12px no-repeat;
  }
`;
const Swatch = styled.span`
  width: 16px;
  height: 16px;
  border: 1px solid rgba(40, 40, 20, 0.6);
  background: ${p => p.$color};
`;
const layers = [
  ['england_gor_2011', '#b27a6f', true],
  ['scotland_ol_1991', '#739d72', false],
  ['wales_ol_2011', '#d5b43c', false],
];

/* ---------- map ---------- */

const Canvas = styled.section`
  min-width: 0;
  min-height: 0;
  border: 1px solid ${line};
  border-right-color: #999;
  background: #fff;
`;
const MapSvg = styled.svg`
  display: block;
  width: 100%;
  height: 100%;
`;
const coast = `645,135 647,138 649,142 653,146 658,148 662,150 663,154 667,158 672,161 673,167 676,173 676,180 674,186 679,191 677,194 678,198 681,207 680,210 682,213 685,222 688,228 691,233 692,243 695,255 699,260 703,264 704,269 712,273 720,278 729,280 737,284 745,288 750,295 755,305 758,312 765,318 767,324 773,327 779,330 777,332 773,332 771,338 771,347 777,358 785,370 795,382 797,388 795,392 790,389 780,387 775,383 770,376 767,375 762,378 757,377 758,379 763,379 768,378 772,383 778,390 788,397 795,400 800,407 805,420 811,430 813,440 813,450 810,455 803,460 797,467 792,471 800,468 799,466 804,463 802,467 804,469 806,476 810,478 814,482 816,475 820,468 823,463 830,461 840,461 850,459 863,461 880,464 890,469 902,478 909,487 913,498 914,508 916,515 913,523 913,532 908,538 907,550 905,562 897,568 887,579 881,579 885,582 885,587 883,594 875,600 867,600 865,598 864,602 857,603 857,605 863,604 864,613 862,617 859,618 868,615 871,614 865,623 866,625 861,629 859,627 853,632 843,632 847,637 858,641 865,648 877,646 897,643 900,646 895,653 897,668 893,677 886,682 876,687 873,695 861,694 851,703 843,710 832,719 824,723 810,717 796,715 775,715 758,718 747,718 737,726 730,721 713,720 710,721 703,717 697,713 698,717 690,723 682,727 668,726 657,728 653,733 652,742 645,743 633,740 617,737 614,742 617,747 615,751 613,743 605,737 593,728 582,725 572,730 557,731 547,739 542,739 541,733 541,740 537,749 539,757 539,763 535,770 532,771 530,766 531,772 527,775 524,785 519,786 517,780 516,784 513,784 510,780 505,775 497,774 492,770 487,767 484,762 485,767 488,769 483,772 478,767 467,767 463,770 448,769 443,769 441,780 432,783 429,785 424,789 423,778 420,787 420,790 417,795 419,799 416,806 410,807 407,811 404,807 403,799 397,794 387,790 383,792 383,797 372,800 370,795 372,787 380,782 387,780 392,783 395,778 407,772 408,768 413,764 414,759 422,756 423,743 427,744 432,742 431,738 433,738 442,737 444,729 452,723 459,717 460,702 463,689 470,691 473,693 477,693 484,687 485,683 484,675 487,669 500,668 518,665 533,667 538,667 547,672 557,672 570,668 574,666 569,664 573,658 577,650 583,646 575,649 568,655 567,651 590,634 598,633 598,627 600,622 599,600 602,597 594,596 588,590 582,587 578,588 573,581 569,573 569,565 567,563 570,558 569,553 575,548 579,547 576,543 580,537 573,537 561,527 565,523 576,518 577,515 575,512 572,516 568,515 572,508 565,500 560,480 570,450 573,410 570,399 574,397 573,378 575,367 574,352 582,347 586,338 589,336 585,337 582,338 578,334 577,338 575,333 574,338 572,333 570,338 566,340 562,332 558,322 552,312 551,305 546,297 537,285 542,277 542,268 551,257 550,249 560,233 570,233 577,230 579,222 583,223 593,213 602,208 606,198 612,191 622,188 626,182 631,179 636,177 635,173 632,164 627,155 633,154 637,146`;
const isleOfWight = '679,733 688,727 700,722 705,724 713,724 717,731 709,737 707,742 701,744 694,738 687,733 680,734';
const borders = [
  '602,208 604,212 610,217 615,219 615,224 609,228 611,233 611,237 608,242 610,250 613,252 621,246 622,249 627,254 625,264 629,269 627,273 636,283 637,292',
  '637,292 645,289 652,292 658,287 661,288 665,283 673,284 678,289 684,291 684,287 685,292 686,289 693,291 702,286 712,287 725,288 727,282 729,280',
  '637,292 630,293 627,298 628,302 624,305 627,308 627,317 617,320 609,329 612,333 616,340 623,342 625,346 633,349 638,353 645,364 638,371 637,380 639,383 645,383 647,388 655,399 651,403 645,408',
  '655,399 662,404 668,412',
  '722,404 725,408 732,408 737,401 743,402 745,408 753,405 758,398 753,398 763,396 767,389 772,393 774,403 779,409 782,400 788,397',
  '678,505 682,510 690,515 698,522 707,535 701,541 704,545 701,550 702,555 696,562 692,567 690,564 685,567 683,578 675,584',
  '675,584 672,578 674,575 668,573 665,566 658,572 660,577 653,574 645,576 638,578 637,573 640,575 635,578 628,582 623,577 620,580 617,577 613,576 613,583 617,591 605,595 601,598',
  '696,560 702,566 697,567 700,580 707,580 712,573 722,568 728,574 732,569 729,564 745,555 745,546 752,546 758,539 756,534 761,528 765,523 762,512 756,508 756,503 767,499 780,500 792,498 793,493 800,492 808,483 806,477',
  '745,555 745,562 748,564 746,573 743,588 752,593 753,597 745,599 742,594 740,597 745,603 752,609 755,618 758,622 770,618 785,613 792,616 797,622 812,619 817,628 814,630 810,637 805,643 805,651 800,659 793,656 785,658 778,653 774,656 772,651 770,654 769,647 758,638 758,630 757,622',
  '810,637 818,639 825,639 828,634 843,632',
  '675,584 672,588 670,597 669,605 672,615 671,627 678,635 682,643 681,647 685,654 682,665 671,670 675,683 677,695 673,701 660,695 652,696 656,701 662,704 659,708 663,712 663,720 669,725',
];
const EnglandMap = () => (
  <MapSvg viewBox="300 109 631 734" role="img" aria-label="Map of the English regions">
    <g fill="#e77148" stroke="#3b2c26" strokeWidth="1" strokeLinejoin="round">
      <polygon points={coast} />
      <polygon points={isleOfWight} />
      {borders.map(points => <polyline key={points} points={points} fill="none" />)}
      <path d="M452 668l2 4-1 1zM671 156l3-3M668 156l1 1" />
      <path d="M318 809l4-4 3 1-3 2 6-2-2-3M324 810l3 1-3 1M316 816l3-2" strokeWidth="2" />
    </g>
  </MapSvg>
);

/* ---------- menus ---------- */

const Menu = styled.ul`
  position: absolute;
  z-index: 2;
  margin: 0;
  padding: 0;
  list-style: none;
  background: #fff;
  box-shadow: inset 0 0 0 1px #8b8d8b, 0 5px 16px 1px rgba(0, 0, 0, 0.5);
`;
const ContextMenu = styled(Menu)`
  left: 254px;
  top: 72px;
  width: 239px;
`;
const SubMenu = styled(Menu)`
  left: calc(100% - 1px);
  top: 0;
  width: 231px;
`;
const MenuRow = styled.li`
  position: relative;
`;
const MenuButton = styled.button`
  display: flex;
  align-items: center;
  width: 100%;
  height: 25px;
  padding: 0 5px 0 6px;
  border: 1px solid transparent;
  background: none;
  text-align: left;
  white-space: nowrap;
  &:disabled { color: #bebebe; }
  ${p => p.$active && css`
    border-color: #23709f;
    background: ${blue};
    color: #fff;
  `}
`;
const MenuIcon = styled.span`
  display: flex;
  justify-content: center;
  width: 16px;
  margin-right: 5px;
`;
const MenuText = styled.span`
  flex: 1;
`;
const Divider = styled.li`
  height: 2px;
  margin: 0 5px;
  border-top: 1px solid #b9b7b5;
`;
const Pointer = styled.svg`
  position: absolute;
  z-index: 3;
  left: 127px;
  top: 14px;
  width: 14px;
  height: 21px;
`;
const MenuItem = ({ text, icon, check, disabled, arrow, active, children }) => (
  <MenuRow>
    <MenuButton $active={active} disabled={disabled}>
      <MenuIcon>{icon && <Icon name={icon} />}{check && <Check as="span" />}</MenuIcon>
      <MenuText><Label text={text} /></MenuText>
      {arrow && <Triangle $dir="right" $color={active ? '#b9dcf1' : undefined} />}
    </MenuButton>
    {children}
  </MenuRow>
);
const SubMenuButton = styled(MenuButton)`
  padding-left: 27px;
`;

/* ---------- status bar ---------- */

const StatusBar = styled.footer`
  display: flex;
  align-items: center;
  gap: 3px;
  flex: none;
  height: 31px;
  padding: 0 1px 0 4px;
  font-size: 9px;
`;
const field = css`
  border: 1px solid #aaa7a3;
  border-radius: 3px;
  background: #fff;
`;
const Search = styled.label`
  ${field}
  display: flex;
  align-items: center;
  gap: 7px;
  flex: 1;
  min-width: 120px;
  height: 25px;
  padding-left: 8px;
  font-size: 12px;
`;
const PlainInput = styled.input`
  flex: 1;
  min-width: 0;
  width: 0;
  padding: 0;
  border: 0;
  outline: 0;
  background: none;
  &::placeholder { color: #8b8b8b; opacity: 1; }
`;
const Coordinate = styled.input`
  ${field}
  width: 84px;
  height: 22px;
  padding: 0;
  text-align: center;
`;
const Cell = styled.span`
  display: flex;
  align-items: center;
  justify-content: ${p => p.$align || 'center'};
  flex: none;
  width: ${p => p.$w}px;
  padding-left: ${p => p.$pad || 0}px;
  white-space: nowrap;
`;
const Combo = styled.label`
  ${field}
  display: flex;
  flex: none;
  width: 88px;
  height: 25px;
  align-items: center;
  overflow: hidden;
`;
const Select = styled.select`
  appearance: none;
  flex: 1;
  min-width: 0;
  padding: 0 0 0 4px;
  border: 0;
  background: none;
`;
const ComboArrow = styled.span`
  display: flex;
  align-items: center;
  justify-content: center;
  width: 20px;
  height: 100%;
  border-left: 1px solid #b9b5b1;
  background: linear-gradient(#fdfcfb, #eeebe7);
`;
const Spin = styled.div`
  ${field}
  display: flex;
  flex: none;
  width: ${p => p.$w}px;
  height: 24px;
  padding-left: 4px;
  overflow: hidden;
`;
const SpinButtons = styled.div`
  display: flex;
  flex-direction: column;
  width: 14px;
  border-left: 1px solid #b9b5b1;
  background: #f6f4f1;
`;
const SpinButton = styled.button`
  display: flex;
  flex: 1;
  align-items: center;
  justify-content: center;
  padding: 0;
  border: 0;
  background: none;
`;
const SpinBox = ({ width, value, label }) => (
  <Spin $w={width}>
    <PlainInput defaultValue={value} aria-label={label} />
    <SpinButtons>
      <SpinButton aria-label={`Increase ${label}`}><Triangle $dir="up" $color="#555" /></SpinButton>
      <SpinButton aria-label={`Decrease ${label}`}><Triangle $dir="down" $small $color="#555" /></SpinButton>
    </SpinButtons>
  </Spin>
);
const RenderToggle = styled.label`
  display: flex;
  align-items: center;
  gap: 5px;
  width: 66px;
  padding-left: 3px;
`;
const StatusButton = styled.button`
  display: flex;
  align-items: center;
  justify-content: center;
  gap: 4px;
  flex: none;
  width: ${p => p.$w}px;
  padding: 0;
  border: 0;
  background: none;
  white-space: nowrap;
`;
const ResizeGrip = styled.span`
  align-self: flex-end;
  width: 14px;
  height: 12px;
  background: radial-gradient(circle, #aaa6a1 40%, transparent 50%) 0 0 / 3px 3px;
  clip-path: polygon(100% 0, 100% 100%, 0 100%);
`;

const barMenus = ['Pro&ject', '&Edit', '&View', '&Layer', '&Settings', '&Plugins', 'Vect&or', '&Raster', '&Database', '&Web', 'Pro&cessing', '&Help'];

export default function App() {
  return (
    <Window>
      <GlobalStyle />
      <TitleBar>
        <WindowButtons>
          <WindowButton aria-label="Window menu">
            <Svg viewBox="0 0 16 16" fill="none"><path d="M4 6l4 3 4-3v2l-4 4-4-4z" fill="#e4e4e4" /></Svg>
          </WindowButton>
        </WindowButtons>
        <Title>*regions - QGIS</Title>
        <WindowButtons $end>
          {[['Minimise', 'M4 8h8'], ['Maximise', 'M4 8h8M8 4v8'], ['Close', 'M4.5 4.5l7 7M11.5 4.5l-7 7']].map(([name, d]) => (
            <WindowButton key={name} aria-label={name}>
              <Svg viewBox="0 0 16 16"><path d={d} stroke="#d5d7d7" strokeWidth="2" /></Svg>
            </WindowButton>
          ))}
        </WindowButtons>
      </TitleBar>
      <MenuBar>
        {barMenus.map(text => <MenuBarItem key={text}><Label text={text} /></MenuBarItem>)}
      </MenuBar>
      <Toolbar><Tools items={mainTools} /><Overflow aria-label="More tools">»</Overflow></Toolbar>
      <Toolbar><Tools items={layerTools} /></Toolbar>

      <Main>
        <Docks>
          <DockTitle>Browser</DockTitle>
          <DockTools>
            {['addLayer', 'refresh', 'funnel', 'collapse', 'info'].map(name => (
              <ToolButton key={name} aria-label={name}><Icon name={name} /></ToolButton>
            ))}
          </DockTools>
          <TreeBox>
            {files.map(([name, icon, level, twist, selected]) => (
              <TreeRow key={name + level} $level={level} $selected={selected}>
                <Twist>{twist && <Triangle $dir={twist} />}</Twist>
                <Icon name={icon} />
                <span>{name}</span>
              </TreeRow>
            ))}
          </TreeBox>
          <Splitter />
          <DockTitle>Layers</DockTitle>
          <DockTools>
            <ToolButton aria-label="Styling"><Icon name="brush" /></ToolButton>
            <ToolButton aria-label="Add group"><Icon name="addGroup" /></ToolButton>
            <ToolButton aria-label="Visibility"><Icon name="eye" /></ToolButton>
            <ToolButton aria-label="Filter legend"><Icon name="funnel" /></ToolButton>
            <ToolButton aria-label="Filter by expression"><Icon name="expression" /></ToolButton>
            <DropButton aria-label="Filter options"><Triangle $dir="down" /></DropButton>
            <ToolButton aria-label="Expand all"><Icon name="expand" /></ToolButton>
            <ToolButton aria-label="Collapse all"><Icon name="collapse" /></ToolButton>
            <ToolButton aria-label="Remove layer"><Icon name="removeLayer" /></ToolButton>
          </DockTools>
          <TreeBox $fill>
            {layers.map(([name, color, active]) => (
              <LayerRow key={name} $active={active}>
                <LayerLabel $active={active}>
                  <Check defaultChecked={active} />
                  <Swatch $color={color} />
                  {name}
                </LayerLabel>
              </LayerRow>
            ))}
          </TreeBox>
        </Docks>
        <Canvas><EnglandMap /></Canvas>
      </Main>

      <StatusBar>
        <Search>
          <Icon name="search" size={13} />
          <PlainInput placeholder="Type to locate (Ctrl+K)" aria-label="Type to locate" />
        </Search>
        <Cell $w={32} $pad={5} $align="flex-start">2 lege</Cell>
        <Cell $w={7} $align="flex-end">d</Cell>
        <Coordinate defaultValue="74043,284643" aria-label="Coordinate" />
        <Cell $w={18}><Icon name="extents" /></Cell>
        <Cell $w={13} $pad={8}>a</Cell>
        <Combo>
          <Select aria-label="Scale" defaultValue="1:3611625"><option>1:3611625</option></Select>
          <ComboArrow><Triangle $dir="down" $small $color="#555" /></ComboArrow>
        </Combo>
        <Cell $w={27}><Icon name="lock" size={15} /></Cell>
        <Cell $w={4}>r</Cell>
        <SpinBox width={91} value="100%" label="Magnifier" />
        <Cell $w={16} $pad={5} $align="flex-start">a</Cell>
        <SpinBox width={87} value="0.0 °" label="Rotation" />
        <RenderToggle><Check defaultChecked />Render</RenderToggle>
        <StatusButton $w={74}><Icon name="globe" size={15} />EPSG:27700</StatusButton>
        <StatusButton $w={40} aria-label="Messages"><Icon name="messages" /></StatusButton>
        <ResizeGrip />
      </StatusBar>

      <ContextMenu>
        <MenuItem text="&Zoom to Layer" icon="zoomLayer" />
        <MenuItem text="&Zoom to Selection" icon="zoomLayerOff" disabled />
        <MenuItem text="&Show in Overview" icon="glasses" />
        <MenuItem text="Show Feature Count" check />
        <MenuItem text="Copy Layer" />
        <MenuItem text="Re&name Layer" />
        <Divider />
        <MenuItem text="&Duplicate Layer" icon="duplicate" />
        <MenuItem text="&Remove Layer..." icon="removeLayer" />
        <Divider />
        <MenuItem text="&Open Attribute Table" icon="table" />
        <MenuItem text="Toggle Editing" icon="pencil" />
        <MenuItem text="&Filter..." />
        <Divider />
        <MenuItem text="&Set Layer Scale Visibility..." />
        <MenuItem text="Set CRS" arrow />
        <Divider />
        <MenuItem text="Export" arrow active>
          <SubMenu>
            <li><SubMenuButton $active>Save Features As...</SubMenuButton></li>
            <li><SubMenuButton disabled>Save Selected Features As...</SubMenuButton></li>
            <li><SubMenuButton>Save as Layer Definition File...</SubMenuButton></li>
            <li><SubMenuButton>Save as QGIS Layer Style File...</SubMenuButton></li>
            <Pointer viewBox="0 0 14 21" aria-hidden="true">
              <path d="M1 1v16l3.800-3.500L7.500 20l3-1.300-2.700-6L13 12.500z" fill="#fff" stroke="#111" strokeWidth="1.200" />
            </Pointer>
          </SubMenu>
        </MenuItem>
        <Divider />
        <MenuItem text="Styles" arrow />
        <MenuItem text="&Properties..." />
      </ContextMenu>
    </Window>
  );
}
